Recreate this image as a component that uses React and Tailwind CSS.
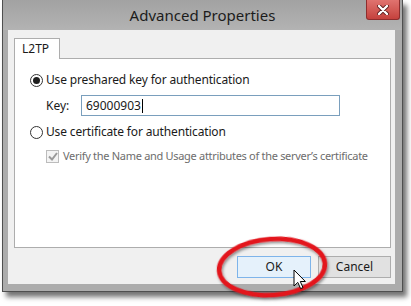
export default function App() {
  return (
    <div className="relative w-[411px] h-[306px] bg-white overflow-hidden" style={{ fontFamily: '"Noto Sans", "Open Sans", sans-serif' }}>
      <div className="relative ml-[2px] w-[401px] h-[292px] flex flex-col bg-[#acacac] border border-t-0 border-[#4f4f4f] shadow-[4px_5px_5px_rgba(0,0,0,0.55)]">
        {/* title bar */}
        <div className="h-[30px] flex items-center justify-center bg-gradient-to-b from-[#a2a2a2] to-[#b3b3b3] text-[15px] text-[#1c1c1c]">
          Advanced Properties
        </div>
        <div className="absolute right-[2px] top-0 w-[34px] h-[20px] rounded-b-[3px] border border-t-0 border-[#8e2d2d] bg-gradient-to-b from-[#e0736f] to-[#c5413d] flex items-center justify-center">
          <svg width="12" height="10" viewBox="0 0 12 10">
            <path d="M2 1 L10 9 M10 1 L2 9" stroke="#5a1a1a" strokeWidth="4" strokeLinecap="round" />
            <path d="M2 1 L10 9 M10 1 L2 9" stroke="#ffffff" strokeWidth="2.4" strokeLinecap="round" />
          </svg>
        </div>

        {/* client area */}
        <div className="flex-1 ml-[5px] mr-[7px] mb-[7px] bg-[#f0f0f0] flex flex-col pl-[6px] pr-[4px] pt-[8px] text-[12px] text-[#1a1a1a]">
          <div className="flex">
            <div className="relative z-10 -mb-px w-[46px] h-[21px] bg-white border border-b-0 border-[#adadad] pl-[7px] pt-[1px] leading-[18px]">
              L2TP
            </div>
          </div>
          <div className="h-[190px] bg-white border border-[#adadad] pt-[13px] pl-[15px] whitespace-nowrap">
            <div className="flex items-center h-[16px] gap-[3px]">
              <span className="w-[13px] h-[13px] rounded-full border border-[#333333] bg-white flex items-center justify-center">
                <span className="w-[7px] h-[7px] rounded-full bg-[#1f1f1f]" />
              </span>
              <span className="tracking-[-0.15px]">Use preshared key for authentication</span>
            </div>
            <div className="flex items-center mt-[7px] h-[21px] pl-[16px]">
              <span className="w-[35px]">Key:</span>
              <div className="w-[259px] h-[21px] border border-[#7a9fbd] bg-white flex items-center pl-[4px]">
                69000903<span className="ml-px w-px h-[14px] bg-black" />
              </div>
            </div>
            <div className="flex items-center mt-[8px] h-[16px] gap-[3px]">
              <span className="w-[13px] h-[13px] rounded-full border border-[#333333] bg-white" />
              <span className="tracking-[-0.15px]">Use certificate for authentication</span>
            </div>
            <div className="flex items-center mt-[8px] h-[16px] pl-[16px] gap-[4px] text-[#6d6d6d]">
              <span className="w-[13px] h-[13px] shrink-0 border border-[#bcbcbc] bg-[#f4f4f4] flex items-center justify-center">
                <svg width="10" height="9" viewBox="0 0 10 9">
                  <path d="M1 4.5 L4 7.5 L9 1" stroke="#9a9a9a" strokeWidth="2" fill="none" />
                </svg>
              </span>
              <span className="text-[11px] tracking-[-0.3px]">Verify the Name and Usage attributes of the server’s certificate</span>
            </div>
          </div>
          <div className="flex justify-end gap-[7px] mt-[8px]">
            <div className="w-[74px] h-[22px] border border-[#7eb4ea] bg-[#e5f1fb] flex items-center justify-center">OK</div>
            <div className="w-[73px] h-[22px] border border-[#adadad] bg-[#e1e1e1] flex items-center justify-center">Cancel</div>
          </div>
        </div>
      </div>

      {/* annotation overlay */}
      <svg className="absolute inset-0 pointer-events-none" width="411" height="306" viewBox="0 0 411 306">
        <defs>
          <filter id="sh" x="-20%" y="-20%" width="140%" height="140%">
            <feDropShadow dx="1" dy="2" stdDeviation="1.5" floodColor="#000" floodOpacity="0.45" />
          </filter>
        </defs>
        <ellipse cx="272" cy="267" rx="53" ry="28" fill="none" stroke="#e3121b" strokeWidth="4.5" transform="rotate(-4 272 267)" filter="url(#sh)" />
        <path d="M294 270 L294 286 L297.8 282.4 L300.6 288.6 L303 287.6 L300.3 281.5 L305.4 281.5 Z" fill="#ffffff" stroke="#000000" strokeWidth="1" strokeLinejoin="round" />
      </svg>
    </div>
  );
}
